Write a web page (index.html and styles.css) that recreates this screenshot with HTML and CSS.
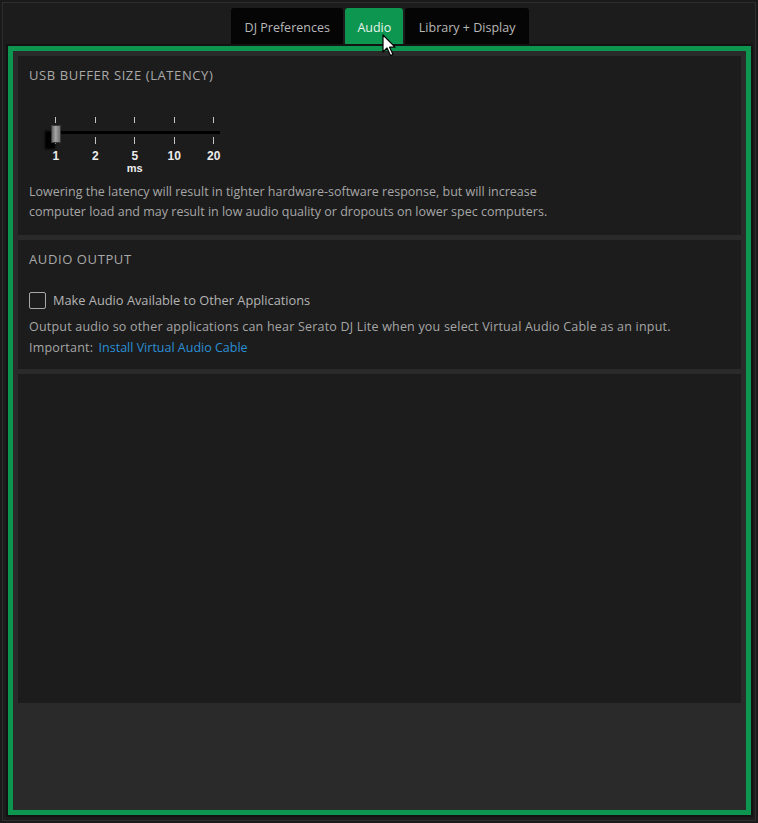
FILE: index.html
```html
<!DOCTYPE html>
<html>
<head>
<meta charset="utf-8">
<link rel="stylesheet" href="styles.css">
</head>
<body>
<div class="window">
  <nav class="tabs">
    <div class="tab">DJ Preferences</div>
    <div class="tab active">Audio</div>
    <div class="tab">Library + Display</div>
  </nav>
  <div class="frame">
    <section class="panel latency">
      <h2 class="heading">USB BUFFER SIZE (LATENCY)</h2>
      <div class="slider">
        <div class="track"></div>
        <div class="thumb"></div>
        <div class="stop"><span class="tick"></span><span class="gap"></span><span class="tick low"></span><span class="num">1</span></div>
        <div class="stop"><span class="tick"></span><span class="gap"></span><span class="tick low"></span><span class="num">2</span></div>
        <div class="stop"><span class="tick"></span><span class="gap"></span><span class="tick low"></span><span class="num">5</span><span class="unit">ms</span></div>
        <div class="stop"><span class="tick"></span><span class="gap"></span><span class="tick low"></span><span class="num">10</span></div>
        <div class="stop"><span class="tick"></span><span class="gap"></span><span class="tick low"></span><span class="num">20</span></div>
      </div>
      <p class="desc">Lowering the latency will result in tighter hardware-software response, but will increase<br>computer load and may result in low audio quality or dropouts on lower spec computers.</p>
    </section>
    <section class="panel output">
      <h2 class="heading">AUDIO OUTPUT</h2>
      <label class="check"><span class="box"></span><span class="check-label">Make Audio Available to Other Applications</span></label>
      <p class="desc tall">Output audio so other applications can hear Serato DJ Lite when you select Virtual Audio Cable as an input.<br>Important: <a class="link">Install Virtual Audio Cable</a></p>
    </section>
    <section class="panel empty"></section>
  </div>
  <svg class="cursor" width="16" height="24" viewBox="0 0 16 24"><path d="M1 1 L1 18 L5 14 L8.5 21.5 L11 20.4 L7.6 13.2 L13 13.2 Z" fill="#fff" stroke="#000" stroke-width="1.2" stroke-linejoin="round"/></svg>
</div>
</body>
</html>
```
FILE: styles.css
```css
* { box-sizing: border-box; }
html, body { margin: 0; padding: 0; }
body {
  background: #1a1a1a;
  width: 758px;
  height: 823px;
  font-family: "Open Sans", "Liberation Sans", sans-serif;
  padding: 2px;
}
.window {
  position: relative;
  height: 819px;
  border: 1px solid #2e2e2e;
  background: #1c1c1c;
  display: flex;
  flex-direction: column;
  padding: 5px 4px 5px 5px;
}
.tabs {
  display: flex;
  justify-content: center;
  gap: 2px;
  height: 38px;
  padding-left: 1px;
}
.tab {
  background: #050505;
  color: #b8b8b8;
  font-size: 12.5px;
  padding: 0 13.5px;
  display: flex;
  align-items: center;
  border-radius: 3px 3px 0 0;
}
.tab.active {
  background: #0d9650;
  color: #e8f3ec;
  padding: 0 12px;
}
.frame {
  flex: 1;
  border: 5px solid #0d9650;
  box-shadow: 0 0 0 2px #131313;
  background: #2a2a2a;
  padding: 5px 5px 0 5px;
  display: flex;
  flex-direction: column;
  gap: 5px;
}
.panel {
  background: #1c1c1c;
  padding: 11px 11px 0;
}
.latency { height: 179px; }
.output { height: 129px; }
.empty { height: 329px; }
.heading {
  margin: 0;
  font-weight: normal;
  font-size: 13px;
  letter-spacing: 0.6px;
  line-height: 16px;
  color: #a9a9a9;
}
.slider {
  position: relative;
  display: flex;
  margin: 34px 0 0 7px;
  width: 200px;
  height: 62px;
}
.stop {
  width: 39.5px;
  display: flex;
  flex-direction: column;
  align-items: center;
}
.tick {
  display: block;
  width: 1px;
  height: 6px;
  background: #c4c4c4;
}
.tick.low { height: 7px; }
.gap { display: block; height: 14px; }
.num, .unit {
  font-family: "Liberation Sans", Arial, sans-serif;
  font-weight: bold;
  color: #ececec;
  font-size: 12px;
  line-height: 12px;
  margin-top: 6px;
}
.unit {
  font-size: 11px;
  line-height: 11px;
  margin-top: 1px;
}
.track {
  position: absolute;
  left: 20px;
  top: 14px;
  width: 164px;
  height: 3px;
  background: #000;
}
.thumb {
  position: absolute;
  left: 15px;
  top: 8px;
  width: 10px;
  height: 18px;
  border: 1px solid #3a3a3a;
  background: linear-gradient(90deg, #666, #a4a4a4 45%, #707070);
  box-shadow: -6px 6px 2px #000;
}
.desc {
  margin: 3px 0 0;
  font-size: 12.5px;
  line-height: 20px;
  color: #a6a6a6;
}
.check {
  display: flex;
  align-items: center;
  gap: 7px;
  margin-top: 25px;
  height: 16px;
}
.box {
  width: 17px;
  height: 17px;
  border: 1.5px solid #a8a8a8;
  border-radius: 2px;
}
.check-label {
  font-size: 12.8px;
  color: #b4b4b4;
}
.desc.tall {
  margin-top: 8px;
  line-height: 21px;
  letter-spacing: 0.2px;
}
.link {
  color: #2b8fd6;
  margin-left: 2px;
  letter-spacing: 0;
}
.cursor {
  position: absolute;
  left: 379px;
  top: 31px;
}
```
